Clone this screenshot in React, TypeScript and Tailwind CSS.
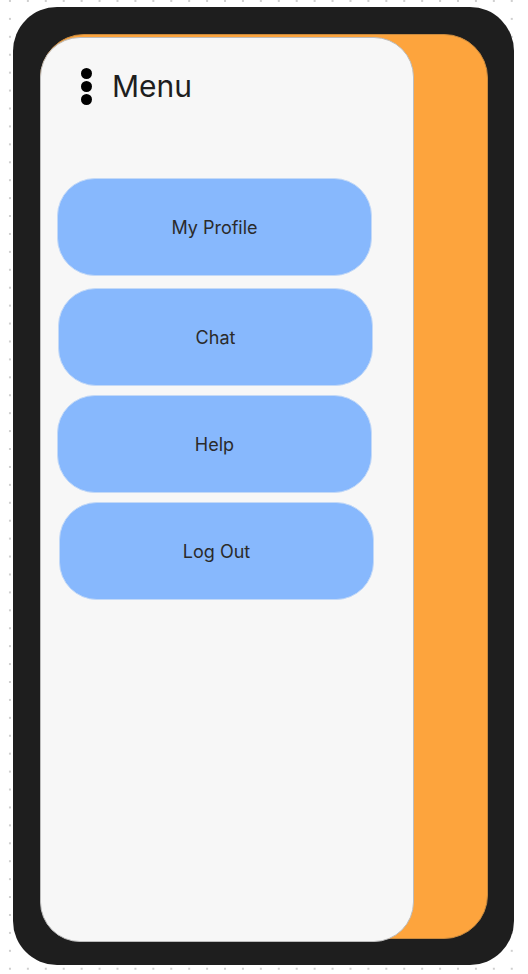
import React from 'react';

const items = [
  { label: 'My Profile', cls: 'mt-0 ml-0' },
  { label: 'Chat', cls: 'mt-[12px] ml-[1px]' },
  { label: 'Help', cls: 'mt-[9px] ml-0' },
  { label: 'Log Out', cls: 'mt-[9px] ml-[2px]' },
];

const App: React.FC = () => {
  return (
    <div className="w-[528px] h-[974px] bg-white bg-[radial-gradient(circle,#cfcfcf_1px,transparent_1.3px)] bg-[length:17.93px_17.93px] bg-[position:1px_-8px] font-['Inter',sans-serif] overflow-hidden">
      <div className="pt-[7px] pl-[13px]">
        {/* phone frame */}
        <div className="relative w-[501px] h-[958px] rounded-[44px] bg-[#1e1e1e] pt-[27px] pl-[27px]">
          {/* main screen */}
          <div className="w-[448px] h-[905px] rounded-[44px] bg-[#fda43d] border border-[#c98a3e]" />

          {/* drawer */}
          <div className="absolute left-[27px] top-[30px] w-[374px] h-[905px] rounded-[40px] bg-[#f7f7f7] border border-[#bdbdbd] flex flex-col">
            <div className="flex items-center h-[96px] pl-[40px]">
              <div className="flex flex-col gap-[2px]">
                <span className="block w-[11px] h-[11px] rounded-full bg-black" />
                <span className="block w-[11px] h-[11px] rounded-full bg-black" />
                <span className="block w-[11px] h-[11px] rounded-full bg-black" />
              </div>
              <span className="ml-[20px] text-[30px] leading-none text-[#1e1e1e]">Menu</span>
            </div>

            <div className="flex flex-col pl-[16px] pt-[44px]">
              {items.map((it) => (
                <button
                  key={it.label}
                  className={`${it.cls} w-[315px] h-[98px] rounded-[38px] bg-[#87b8fd] border border-[#c3d9f7] text-[18px] text-[#2b2b2b] flex items-center justify-center`}
                >
                  {it.label}
                </button>
              ))}
            </div>
          </div>
        </div>
      </div>
    </div>
  );
};

export default App;
